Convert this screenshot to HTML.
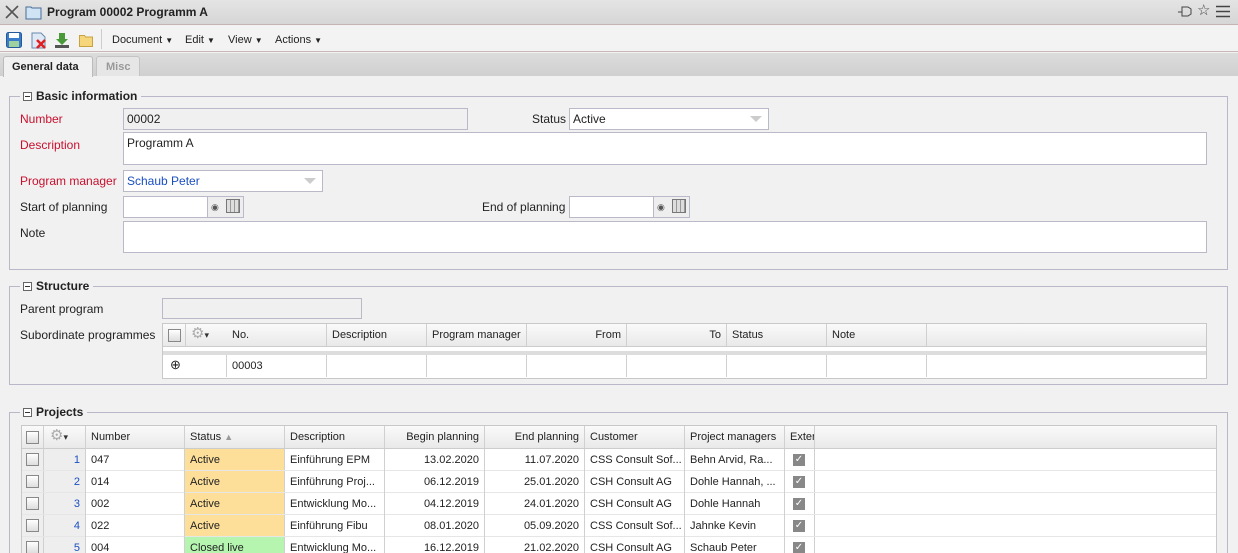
<!DOCTYPE html><html style="height:553px;overflow:hidden"><head><meta charset="utf-8"><style>
*{box-sizing:border-box;margin:0;padding:0}
body{width:1238px;height:553px;overflow:hidden;background:#f1f1f1;font-family:"Liberation Sans",sans-serif;font-size:12px;color:#222;position:relative}
.a{position:absolute}
.t{position:absolute;white-space:nowrap;line-height:14px}
.red{color:#c8102e}
.in{position:absolute;background:#fff;border:1px solid #b9b9c8}
.ro{background:#f0f0f0}
.fs{position:absolute;border:1px solid #b8b8c8}
.lg{position:absolute;background:#f1f1f1;padding:0 4px 0 3px;font-weight:bold;font-size:12px;line-height:14px;display:flex;align-items:center;gap:4px}
.mn{width:9px;height:9px;border:1px solid #666;position:relative;background:#fff}
.mn:after{content:"";position:absolute;left:1px;top:3px;width:5px;height:1px;background:#333}
.cb{position:absolute;width:13px;height:13px;border:1px solid #888;background:linear-gradient(#fff,#ddd)}
.cell{position:absolute;border-right:1px solid #d0d0d0;padding:0 5px;line-height:22px;white-space:nowrap;overflow:hidden;font-size:11px}
.hd{background:linear-gradient(#fafafa,#e9e9e9)}
.dd{position:absolute;right:6px;top:7px;width:0;height:0;border-left:6px solid transparent;border-right:6px solid transparent;border-top:6px solid #ccc}
</style></head><body>
<div class="a" style="left:0;top:0;width:1238px;height:25px;background:linear-gradient(#e4e4e4,#d6d6d6);border-bottom:1px solid #c4b4b4"></div>
<svg class="a" style="left:5px;top:5px" width="14" height="14"><path d="M1 1L13 13M13 1L1 13" stroke="#555" stroke-width="1.6"/></svg>
<svg class="a" style="left:25px;top:4px" width="17" height="16"><path d="M1 3h5l1 1h9v11H1z" fill="#cfe3f5" stroke="#4a6d99"/></svg>
<div class="t" style="left:47px;top:5px;font-weight:bold">Program 00002 Programm A</div>
<svg class="a" style="left:1177px;top:5px" width="16" height="14"><path d="M1 7h4M5 2h6l3 2v5l-3 2H5z" fill="none" stroke="#444"/></svg>
<div class="t" style="left:1197px;top:4px;font-size:15px;color:#444">☆</div>
<svg class="a" style="left:1216px;top:5px" width="14" height="13"><path d="M0 1.5h14M0 6.5h14M0 11.5h14" stroke="#444" stroke-width="1.6"/></svg>
<div class="a" style="left:0;top:26px;width:1238px;height:26px;background:#f3f3f3;border-bottom:1px solid #c8b8b8"></div>
<svg class="a" style="left:6px;top:32px" width="16" height="16"><rect x="0.5" y="0.5" width="15" height="15" rx="2" fill="#3a7cc8" stroke="#245a9a"/><rect x="3" y="1" width="10" height="5" fill="#fff"/><rect x="3" y="9" width="10" height="6" fill="#9fd09f"/></svg>
<svg class="a" style="left:31px;top:32px" width="16" height="17"><path d="M1 1h9l4 4v11H1z" fill="#dfe9f5" stroke="#6a8ab0"/><path d="M6 8l8 8M14 8l-8 8" stroke="#e02020" stroke-width="2.5"/></svg>
<svg class="a" style="left:54px;top:32px" width="16" height="16"><path d="M5 1h6v6h3l-6 6-6-6h3z" fill="#4a9a3a"/><rect x="1" y="13" width="14" height="3" fill="#555"/></svg>
<svg class="a" style="left:79px;top:34px" width="15" height="13"><path d="M0.5 1.5h5l1 1.5h7v9.5H0.5z" fill="#f5d67a" stroke="#c9a240"/></svg>
<div class="a" style="left:101px;top:29px;width:1px;height:20px;background:#ccc"></div>
<div class="t" style="left:112px;top:33px;font-size:11px">Document <span style="font-size:8px">▼</span></div>
<div class="t" style="left:185px;top:33px;font-size:11px">Edit <span style="font-size:8px">▼</span></div>
<div class="t" style="left:228px;top:33px;font-size:11px">View <span style="font-size:8px">▼</span></div>
<div class="t" style="left:275px;top:33px;font-size:11px">Actions <span style="font-size:8px">▼</span></div>
<div class="a" style="left:0;top:53px;width:1238px;height:23px;background:linear-gradient(#dcdcdc,#d0d0d0)"></div>
<div class="a" style="left:3px;top:56px;width:90px;height:21px;background:#f1f1f1;border:1px solid #bbb;border-bottom:none;border-radius:3px 3px 0 0"></div>
<div class="t" style="left:12px;top:60px;font-weight:bold;font-size:11px">General data</div>
<div class="a" style="left:96px;top:56px;width:44px;height:20px;background:#e6e6e6;border:1px solid #c4c4c4;border-bottom:none;border-radius:3px 3px 0 0"></div>
<div class="t" style="left:106px;top:60px;font-weight:bold;color:#999;font-size:11px">Misc</div>
<div class="fs" style="left:9px;top:96px;width:1219px;height:174px"></div>
<div class="lg" style="left:20px;top:89px"><span class="mn"></span>Basic information</div>
<div class="t red" style="left:20px;top:112px">Number</div>
<div class="in ro" style="left:123px;top:108px;width:345px;height:22px"></div><div class="t" style="left:127px;top:112px">00002</div>
<div class="t" style="left:532px;top:112px">Status</div>
<div class="in" style="left:569px;top:108px;width:200px;height:22px"><div class="dd"></div></div><div class="t" style="left:573px;top:112px">Active</div>
<div class="t red" style="left:20px;top:138px">Description</div>
<div class="in" style="left:123px;top:132px;width:1084px;height:33px"></div><div class="t" style="left:127px;top:136px">Programm A</div>
<div class="t red" style="left:20px;top:174px">Program manager</div>
<div class="in" style="left:123px;top:170px;width:200px;height:22px"><div class="dd"></div></div><div class="t" style="left:127px;top:174px;color:#1a4fc0">Schaub Peter</div>
<div class="t" style="left:20px;top:200px">Start of planning</div>
<div class="in" style="left:123px;top:196px;width:85px;height:22px"></div>
<div class="in" style="left:207px;top:196px;width:37px;height:22px;background:#eee"></div>
<div class="t" style="left:211px;top:200px;font-size:9px;color:#555">◉</div>
<div class="a" style="left:226px;top:199px;width:14px;height:14px;border:1px solid #777;background:repeating-linear-gradient(90deg,#ddd 0 3px,#999 3px 4px)"></div>
<div class="t" style="left:482px;top:200px">End of planning</div>
<div class="in" style="left:569px;top:196px;width:85px;height:22px"></div>
<div class="in" style="left:653px;top:196px;width:37px;height:22px;background:#eee"></div>
<div class="t" style="left:657px;top:200px;font-size:9px;color:#555">◉</div>
<div class="a" style="left:672px;top:199px;width:14px;height:14px;border:1px solid #777;background:repeating-linear-gradient(90deg,#ddd 0 3px,#999 3px 4px)"></div>
<div class="t" style="left:20px;top:226px">Note</div>
<div class="in" style="left:123px;top:221px;width:1084px;height:32px"></div>
<div class="fs" style="left:9px;top:286px;width:1219px;height:99px"></div>
<div class="lg" style="left:20px;top:279px"><span class="mn"></span>Structure</div>
<div class="t" style="left:20px;top:302px">Parent program</div>
<div class="in ro" style="left:162px;top:298px;width:200px;height:21px"></div>
<div class="t" style="left:20px;top:328px">Subordinate programmes</div>
<div class="a" style="left:162px;top:323px;width:1045px;height:56px;background:#fff;border:1px solid #c8c8c8"></div>
<div class="a hd" style="left:163px;top:324px;width:1043px;height:23px;border-bottom:1px solid #ccc"></div>
<div class="a" style="left:163px;top:351px;width:1043px;height:4px;background:#ddd"></div>
<div class="cb" style="left:168px;top:329px"></div>
<div class="t" style="left:191px;top:327px;color:#aaa;font-size:15px">⚙<span style="font-size:9px;color:#333">▾</span></div>
<div class="cell" style="left:185px;top:324px;width:1px;height:23px;padding:0"></div>
<div class="cell" style="left:163px;top:355px;width:64px;height:22px"></div>
<div class="t" style="left:170px;top:358px;font-size:13px">⊕</div>
<div class="cell" style="left:227px;top:324px;width:100px">No.</div>
<div class="cell" style="left:327px;top:324px;width:100px">Description</div>
<div class="cell" style="left:427px;top:324px;width:100px">Program manager</div>
<div class="cell" style="left:527px;top:324px;width:100px;text-align:right">From</div>
<div class="cell" style="left:627px;top:324px;width:100px;text-align:right">To</div>
<div class="cell" style="left:727px;top:324px;width:100px">Status</div>
<div class="cell" style="left:827px;top:324px;width:100px">Note</div>
<div class="cell" style="left:227px;top:355px;width:100px">00003</div>
<div class="cell" style="left:327px;top:355px;width:100px;height:22px"></div>
<div class="cell" style="left:427px;top:355px;width:100px;height:22px"></div>
<div class="cell" style="left:527px;top:355px;width:100px;height:22px"></div>
<div class="cell" style="left:627px;top:355px;width:100px;height:22px"></div>
<div class="cell" style="left:727px;top:355px;width:100px;height:22px"></div>
<div class="cell" style="left:827px;top:355px;width:100px;height:22px"></div>
<div class="fs" style="left:9px;top:412px;width:1219px;height:160px"></div>
<div class="lg" style="left:20px;top:405px"><span class="mn"></span>Projects</div>
<div class="a" style="left:21px;top:425px;width:1196px;height:140px;background:#fff;border:1px solid #c8c8c8"></div>
<div class="a hd" style="left:22px;top:426px;width:1194px;height:23px;border-bottom:1px solid #ccc"></div>
<div class="a" style="left:22px;top:449px;width:64px;height:110px;background:#eee"></div>
<div class="cb" style="left:26px;top:431px"></div>
<div class="t" style="left:50px;top:429px;color:#aaa;font-size:15px">⚙<span style="font-size:9px;color:#333">▾</span></div>
<div class="cell" style="left:22px;top:426px;width:22px;height:130px;padding:0"></div>
<div class="cell" style="left:44px;top:426px;width:42px;height:130px;padding:0"></div>
<div class="cell" style="left:86px;top:426px;width:99px">Number</div>
<div class="cell" style="left:185px;top:426px;width:100px">Status <span style="color:#999;font-size:9px">▲</span></div>
<div class="cell" style="left:285px;top:426px;width:100px">Description</div>
<div class="cell" style="left:385px;top:426px;width:100px;text-align:right">Begin planning</div>
<div class="cell" style="left:485px;top:426px;width:100px;text-align:right">End planning</div>
<div class="cell" style="left:585px;top:426px;width:100px">Customer</div>
<div class="cell" style="left:685px;top:426px;width:100px">Project managers</div>
<div class="cell" style="left:785px;top:426px;width:30px">Extern</div>
<div id="rows"></div>
<script>
var d=[["1","047","Active","Einführung EPM","13.02.2020","11.07.2020","CSS Consult Sof...","Behn Arvid, Ra..."],
["2","014","Active","Einführung Proj...","06.12.2019","25.01.2020","CSH Consult AG","Dohle Hannah, ..."],
["3","002","Active","Entwicklung Mo...","04.12.2019","24.01.2020","CSH Consult AG","Dohle Hannah"],
["4","022","Active","Einführung Fibu","08.01.2020","05.09.2020","CSS Consult Sof...","Jahnke Kevin"],
["5","004","Closed live","Entwicklung Mo...","16.12.2019","21.02.2020","CSH Consult AG","Schaub Peter"]];
var h="";d.forEach(function(r,i){var y=449+i*22;
h+='<div class="a" style="left:22px;top:'+(y+21)+'px;width:1194px;height:1px;background:#e6e6e6"></div>';
h+='<div class="cb" style="left:26px;top:'+(y+4)+'px"></div>';
h+='<div class="cell" style="left:44px;top:'+y+'px;width:42px;text-align:right;color:#1a4fc0">'+r[0]+'</div>';
h+='<div class="cell" style="left:86px;top:'+y+'px;width:99px">'+r[1]+'</div>';
h+='<div class="cell" style="left:185px;top:'+y+'px;width:100px;height:21px;background:'+(r[2]=="Active"?"#fddf9a":"#b5f5b0")+'">'+r[2]+'</div>';
h+='<div class="cell" style="left:285px;top:'+y+'px;width:100px">'+r[3]+'</div>';
h+='<div class="cell" style="left:385px;top:'+y+'px;width:100px;text-align:right">'+r[4]+'</div>';
h+='<div class="cell" style="left:485px;top:'+y+'px;width:100px;text-align:right">'+r[5]+'</div>';
h+='<div class="cell" style="left:585px;top:'+y+'px;width:100px">'+r[6]+'</div>';
h+='<div class="cell" style="left:685px;top:'+y+'px;width:100px">'+r[7]+'</div>';
h+='<div class="cell" style="left:785px;top:'+y+'px;width:30px;height:21px"></div>';
h+='<div class="a" style="left:793px;top:'+(y+5)+'px;width:12px;height:12px;background:#888;color:#fff;font-size:10px;line-height:12px;text-align:center">✓</div>';
});document.getElementById("rows").innerHTML=h;
</script>
</body></html>
